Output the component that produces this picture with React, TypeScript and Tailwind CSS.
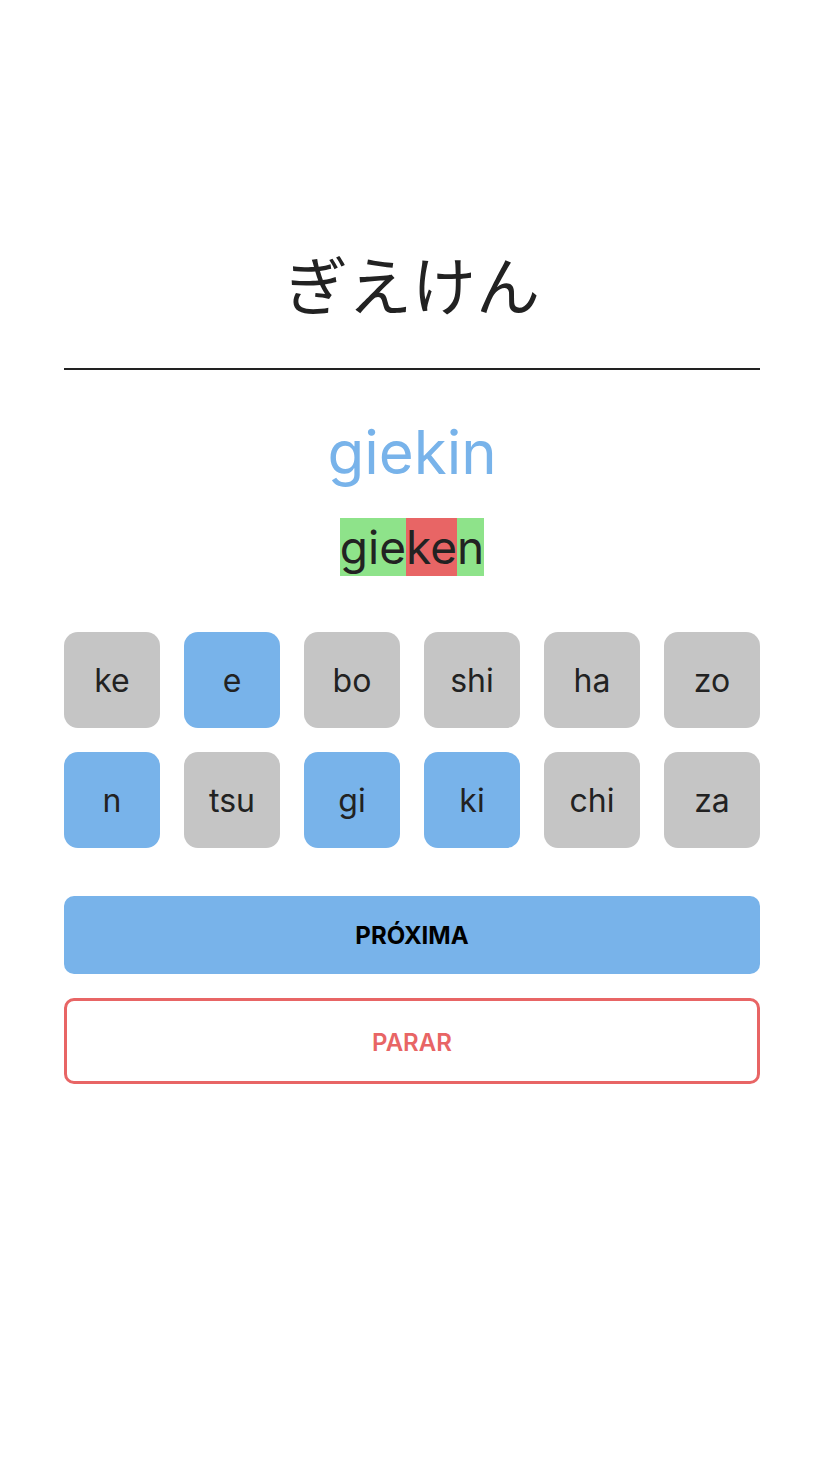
import React from "react";

const tiles = [
  { t: "ke", on: false },
  { t: "e", on: true },
  { t: "bo", on: false },
  { t: "shi", on: false },
  { t: "ha", on: false },
  { t: "zo", on: false },
  { t: "n", on: true },
  { t: "tsu", on: false },
  { t: "gi", on: true },
  { t: "ki", on: true },
  { t: "chi", on: false },
  { t: "za", on: false },
];

export default function App() {
  return (
    <div
      className="w-[824px] h-[1466px] bg-white px-16 flex flex-col"
      style={{ fontFamily: "Inter, 'Noto Sans', 'Noto Sans CJK JP', sans-serif" }}
    >
      <h1
        className="mt-[234px] text-center text-[64px] leading-[96px] text-[#222]"
        style={{ fontFamily: "'Noto Sans CJK JP', 'Noto Sans', sans-serif" }}
      >
        ぎえけん
      </h1>
      <div className="mt-[38px] h-[2px] bg-[#222]" />
      <div className="mt-[46px] text-center text-[60px] leading-[72px] text-[#78b3ea]">giekin</div>
      <div className="mt-[30px] flex justify-center">
        <div className="flex text-[46px] leading-[58px] text-[#222]">
          <span className="bg-[#8ee38a]">gie</span>
          <span className="bg-[#e86565]">ke</span>
          <span className="bg-[#8ee38a]">n</span>
        </div>
      </div>
      <div className="mt-[56px] grid grid-cols-6 gap-6">
        {tiles.map((x, i) => (
          <div
            key={i}
            className={`h-24 pt-[2px] rounded-[14px] flex items-center justify-center text-[32px] text-[#222] ${
              x.on ? "bg-[#78b3ea]" : "bg-[#c5c5c5]"
            }`}
          >
            {x.t}
          </div>
        ))}
      </div>
      <button className="mt-12 h-[78px] pt-[2px] rounded-[10px] bg-[#78b3ea] text-[24px] font-bold text-black">
        PRÓXIMA
      </button>
      <button className="mt-6 h-[86px] pt-[3px] rounded-[10px] border-[3px] border-[#e86565] bg-white text-[24px] font-semibold text-[#e86565]">
        PARAR
      </button>
    </div>
  );
}
